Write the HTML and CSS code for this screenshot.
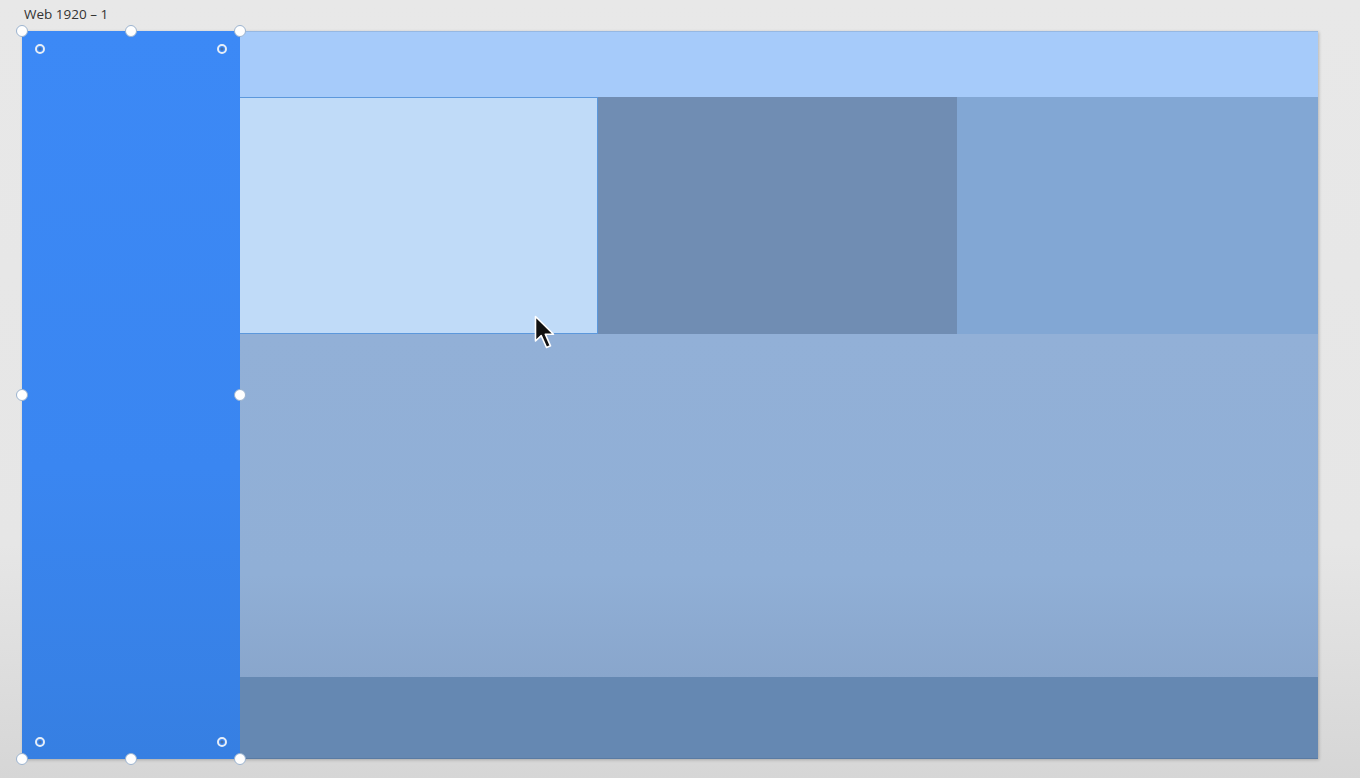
FILE: index.html
```html
<!DOCTYPE html>
<html lang="en">
<head>
<meta charset="utf-8">
<title>Web 1920 – 1</title>
<link rel="stylesheet" href="styles.css">
</head>
<body>
<div class="stage">
  <div class="label">Web 1920 – 1</div>
  <div class="artboard">
    <aside class="sidebar">
      <span class="h h-tl"></span><span class="h h-tc"></span><span class="h h-tr"></span>
      <span class="h h-ml"></span><span class="h h-mr"></span>
      <span class="h h-bl"></span><span class="h h-bc"></span><span class="h h-br"></span>
      <span class="r r-tl"></span><span class="r r-tr"></span>
      <span class="r r-bl"></span><span class="r r-br"></span>
    </aside>
    <main class="main">
      <div class="topbar"></div>
      <div class="cards">
        <div class="card card-a"></div>
        <div class="card card-b"></div>
        <div class="card card-c"></div>
      </div>
      <div class="content"></div>
      <div class="footer"></div>
    </main>
  </div>
  <svg class="cursor" width="22" height="36" viewBox="0 0 22 36">
    <path d="M1.5 1.5 L1.5 26 L7.2 20.6 L12.5 32.5 L16.5 30.8 L11.3 19.2 L19.5 19.2 Z" fill="#111" stroke="#fff" stroke-width="1.6" stroke-linejoin="round"/>
  </svg>
</div>
</body>
</html>
```

FILE: styles.css
```css
html, body {
  margin: 0;
  padding: 0;
}
body {
  width: 1360px;
  height: 778px;
  overflow: hidden;
  background: linear-gradient(to bottom, #e8e8e8 0%, #e6e6e6 70%, #d6d6d6 100%);
  font-family: "Open Sans", "Noto Sans", "Liberation Sans", sans-serif;
}
.stage {
  position: relative;
  padding: 5px 0 0 22px;
}
.label {
  font-size: 13.5px;
  line-height: 18px;
  height: 26px;
  margin-left: 2px;
  color: #333;
}
.artboard {
  display: flex;
  width: 1296px;
  height: 728px;
  box-shadow: 1px 1px 3px rgba(0, 0, 0, 0.22);
}
.sidebar {
  position: relative;
  width: 218px;
  flex: none;
  background: linear-gradient(to bottom, #3c89f6 0%, #3a86f1 60%, #367fe2 100%);
}
.main {
  flex: 1;
  display: flex;
  flex-direction: column;
}
.topbar {
  height: 66px;
  background: #a6cbfa;
  border-top: 1px solid #96b8e2;
  box-sizing: border-box;
}
.cards {
  display: flex;
  height: 237px;
}
.card {
  flex: 1;
}
.card-a {
  background: #c0dbf8;
  border: 1px solid #5c98dc;
  border-left: none;
  flex: 0 0 358px;
  box-sizing: border-box;
}
.card-b {
  background: #708db3;
  flex: 0 0 359px;
}
.card-c {
  background: #82a7d4;
}
.content {
  height: 343px;
  background: linear-gradient(to bottom, #92b0d7 0%, #90afd6 70%, #89a6cc 100%);
}
.footer {
  flex: 1;
  background: #6588b2;
  border-bottom: 1px solid #5a7ba3;
}
.h {
  position: absolute;
  width: 12px;
  height: 12px;
  border-radius: 50%;
  background: #fff;
  border: 1px solid #9bb3cf;
  box-sizing: border-box;
  margin: -6px 0 0 -6px;
}
.h-tl { left: 0; top: 0; }
.h-tc { left: 109px; top: 0; }
.h-tr { left: 218px; top: 0; }
.h-ml { left: 0; top: 364px; }
.h-mr { left: 218px; top: 364px; }
.h-bl { left: 0; top: 728px; }
.h-bc { left: 109px; top: 728px; }
.h-br { left: 218px; top: 728px; }
.r {
  position: absolute;
  width: 10px;
  height: 10px;
  border-radius: 50%;
  border: 2px solid #e6eef8;
  box-sizing: border-box;
  margin: -5px 0 0 -5px;
  background: radial-gradient(circle, #4a6fa0 0 1.3px, #3a86f1 1.8px);
}
.r-tl { left: 18px; top: 18px; }
.r-tr { left: 200px; top: 18px; }
.r-bl { left: 18px; top: 711px; }
.r-br { left: 200px; top: 711px; }
.cursor {
  position: absolute;
  left: 534px;
  top: 315px;
}
```
